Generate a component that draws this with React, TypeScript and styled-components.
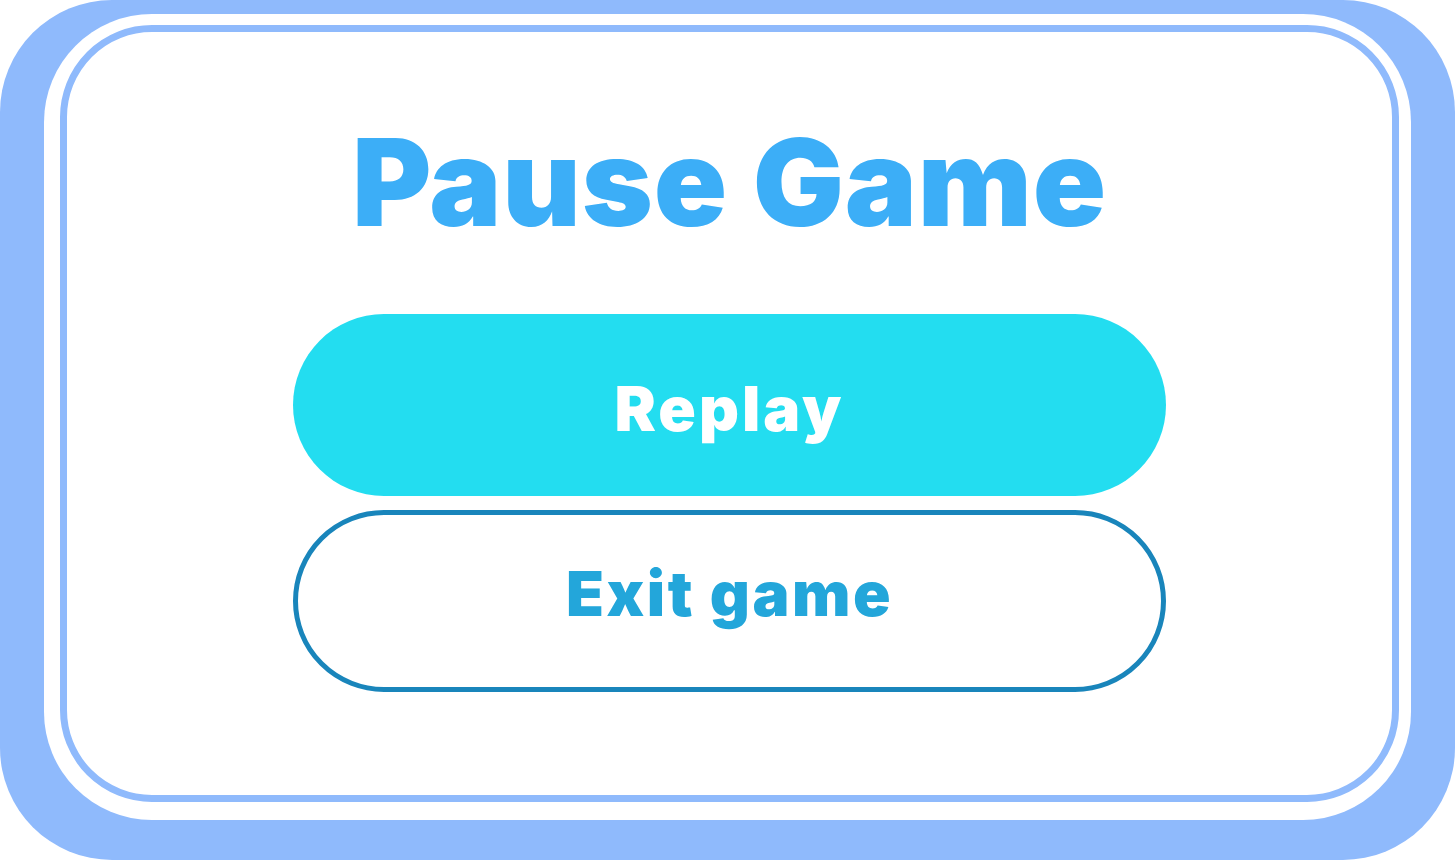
import React from "react";
import styled, { createGlobalStyle } from "styled-components";

const Global = createGlobalStyle`
  html, body { margin: 0; padding: 0; background: #ffffff; }
  body { font-family: Inter, "Noto Sans", sans-serif; }
`;

const Frame = styled.div`
  box-sizing: border-box;
  width: 1455px;
  height: 860px;
  background: #8fbafc;
  border-radius: 112px;
  padding: 14px 44px 40px 44px;
  display: flex;
`;

const Card = styled.div`
  box-sizing: border-box;
  flex: 1;
  background: #ffffff;
  border-radius: 108px;
  padding: 11px 12px 18px 16px;
  display: flex;
`;

const Inner = styled.div`
  box-sizing: border-box;
  flex: 1;
  border: 7px solid #8fbafc;
  border-radius: 92px;
  display: flex;
  flex-direction: column;
  align-items: center;
  padding-top: 80px;
`;

const Title = styled.h1`
  margin: 0 0 62px 0;
  font-family: Inter, "Noto Sans", sans-serif;
  font-weight: 900;
  font-size: 121px;
  line-height: 140px;
  color: #3caef7;
  letter-spacing: 0.8px;
`;

const Buttons = styled.div`
  display: flex;
  flex-direction: column;
  gap: 14px;
`;

const PillButton = styled.button<{ $variant: "filled" | "outline" }>`
  box-sizing: border-box;
  width: 873px;
  height: 182px;
  border-radius: 91px;
  font-family: Inter, "Noto Sans", sans-serif;
  font-weight: 900;
  font-size: 62px;
  cursor: pointer;
  display: flex;
  align-items: center;
  justify-content: center;
  background: ${(p) => (p.$variant === "filled" ? "#23ddf0" : "#ffffff")};
  color: ${(p) => (p.$variant === "filled" ? "#ffffff" : "#23a6da")};
  border: ${(p) => (p.$variant === "filled" ? "none" : "5px solid #1985bb")};
  letter-spacing: ${(p) => (p.$variant === "filled" ? "3px" : "2.5px")};
  padding: ${(p) => (p.$variant === "filled" ? "6px 0 0 0" : "0 0 15px 0")};
`;

export default function App() {
  return (
    <>
      <Global />
      <Frame>
        <Card>
          <Inner>
            <Title>Pause Game</Title>
            <Buttons>
              <PillButton $variant="filled">Replay</PillButton>
              <PillButton $variant="outline">Exit game</PillButton>
            </Buttons>
          </Inner>
        </Card>
      </Frame>
    </>
  );
}
